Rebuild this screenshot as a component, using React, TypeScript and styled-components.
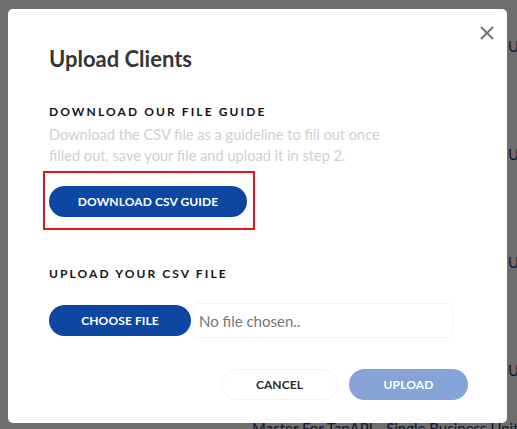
import React from 'react';
import styled, { createGlobalStyle } from 'styled-components';

const GlobalStyle = createGlobalStyle`
  html, body {
    margin: 0;
    padding: 0;
    background: #f3f3f3;
    font-family: 'Lato', 'Liberation Sans', sans-serif;
  }
  * {
    box-sizing: border-box;
  }
`;

const StyledPage = styled.div`
  width: 517px;
  height: 429px;
  overflow: hidden;
  padding-top: 18px;
`;

const StyledRow = styled.div`
  height: 54px;
  border-top: 1px solid #ffffff;
  display: flex;
  align-items: center;
  padding-left: 508px;
  font-size: 15px;
  color: #2a2f6e;
  white-space: nowrap;
`;

const StyledFooterText = styled.div`
  margin-top: 23px;
  padding-left: 252px;
  font-size: 15px;
  color: #2a2f6e;
  white-space: nowrap;
`;

const StyledOverlay = styled.div`
  position: fixed;
  top: 0;
  left: 0;
  width: 517px;
  height: 429px;
  background-color: rgba(0, 0, 0, 0.55);
  padding: 9px 10px 6px 8px;
  display: flex;
`;

const StyledModal = styled.div`
  position: relative;
  flex: 1;
  background: #ffffff;
  border-radius: 5px;
  padding: 36px 39px 0 41px;
  display: flex;
  flex-direction: column;
`;

const StyledClose = styled.button`
  position: absolute;
  top: 13px;
  right: 9px;
  width: 22px;
  height: 22px;
  border: none;
  background: none;
  padding: 0;
  cursor: pointer;
  display: flex;
  align-items: center;
  justify-content: center;
`;

const StyledTitle = styled.h2`
  margin: 0;
  font-size: 22px;
  line-height: 28px;
  font-weight: 700;
  color: #353535;
`;

const StyledSectionTitle = styled.h4<{ $top: number }>`
  margin: ${(props) => props.$top}px 0 0;
  font-size: 12px;
  line-height: 14px;
  font-weight: 700;
  letter-spacing: 2.1px;
  color: #141414;
`;

const StyledText = styled.p`
  margin: 5px 0 0;
  width: 340px;
  font-size: 14.6px;
  line-height: 21px;
  color: #cfcfcf;
`;

const StyledHighlight = styled.div`
  margin: 5px 0 0 -6px;
  width: 212px;
  height: 59px;
  border: 2px solid #e2131f;
  padding: 13px 0 0 4px;
`;

const StyledButton = styled.button<{ $variant?: 'primary' | 'muted' | 'outline'; $width: number }>`
  width: ${(props) => props.$width}px;
  height: 31px;
  border-radius: 16px;
  border: 1px solid
    ${(props) => (props.$variant === 'outline' ? '#f2f2f2' : 'transparent')};
  background: ${(props) =>
    props.$variant === 'muted' ? '#85a3d6' : props.$variant === 'outline' ? '#ffffff' : '#0d47a1'};
  color: ${(props) => (props.$variant === 'outline' ? '#2b2b2b' : '#ffffff')};
  font-family: inherit;
  font-size: 12px;
  font-weight: 700;
  letter-spacing: 0.1px;
  padding: 0;
  cursor: pointer;
`;

const StyledFileRow = styled.div`
  margin-top: 22px;
  display: flex;
  align-items: center;
  gap: 2px;
`;

const StyledFileName = styled.div`
  width: 260px;
  height: 35px;
  border: 1px solid #f3f3f3;
  border-radius: 5px;
  display: flex;
  align-items: center;
  padding-left: 5px;
  font-size: 15px;
  color: #777777;
`;

const StyledActions = styled.div`
  margin-top: 31px;
  display: flex;
  justify-content: flex-end;
  gap: 11px;
`;

const rows = ['Unit', '', 'Unit', '', 'Unit', '', 'Unit'];

const App: React.FC = () => {
  return (
    <>
      <GlobalStyle />
      <StyledPage>
        {rows.map((label, i) => (
          <StyledRow key={i}>{label}</StyledRow>
        ))}
        <StyledFooterText>Master For TapAPI - Single Business Unit</StyledFooterText>
      </StyledPage>
      <StyledOverlay>
        <StyledModal>
          <StyledClose aria-label="Close">
            <svg width="14" height="14" viewBox="0 0 14 14" fill="none">
              <line x1="1" y1="1" x2="13" y2="13" stroke="#6c757d" strokeWidth="2" />
              <line x1="13" y1="1" x2="1" y2="13" stroke="#6c757d" strokeWidth="2" />
            </svg>
          </StyledClose>
          <StyledTitle>Upload Clients</StyledTitle>
          <StyledSectionTitle $top={32}>DOWNLOAD OUR FILE GUIDE</StyledSectionTitle>
          <StyledText>
            Download the CSV file as a guideline to fill out once filled out, save your file and upload it in
            step 2.
          </StyledText>
          <StyledHighlight>
            <StyledButton $width={198}>DOWNLOAD CSV GUIDE</StyledButton>
          </StyledHighlight>
          <StyledSectionTitle $top={37}>UPLOAD YOUR CSV FILE</StyledSectionTitle>
          <StyledFileRow>
            <StyledButton $width={142}>CHOOSE FILE</StyledButton>
            <StyledFileName>No file chosen..</StyledFileName>
          </StyledFileRow>
          <StyledActions>
            <StyledButton $variant="outline" $width={117}>
              CANCEL
            </StyledButton>
            <StyledButton $variant="muted" $width={119}>
              UPLOAD
            </StyledButton>
          </StyledActions>
        </StyledModal>
      </StyledOverlay>
    </>
  );
};

export default App;
